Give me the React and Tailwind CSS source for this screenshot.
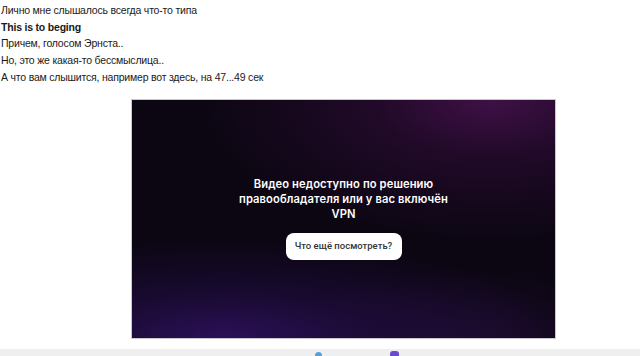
export default function App() {
  return (
    <div className="w-[640px] h-[356px] bg-white overflow-hidden flex flex-col">
      <div className="flex-1 flex flex-col">
        <div className="pl-[1px] pt-[2px] flex flex-col text-[10.5px] tracking-[-0.2px] leading-[16.7px] text-[#1a1a1a] font-['Liberation_Sans','Arial',sans-serif]">
          <p>Лично мне слышалось всегда что-то типа</p>
          <p className="font-bold">This is to beging</p>
          <p>Причем, голосом Эрнста..</p>
          <p>Но, это же какая-то бессмыслица..</p>
          <p>А что вам слышится, например вот здесь, на 47...49 сек</p>
        </div>
        <div className="mt-[13px] ml-[131px] w-[425px] h-[240px] border border-[#c9c6cc] bg-[#0b0612] bg-[image:radial-gradient(ellipse_70%_60%_at_85%_0%,#3f1046_0%,rgba(50,12,58,0.55)_40%,transparent_100%),radial-gradient(ellipse_80%_42%_at_22%_100%,#2b1058_0%,rgba(38,14,78,0.5)_45%,transparent_100%),radial-gradient(ellipse_45%_30%_at_80%_100%,rgba(36,14,56,0.6)_0%,transparent_100%)] flex flex-col items-center justify-center">
          <div className="text-white font-semibold text-[11.2px] leading-[15px] text-center font-['Inter','Noto_Sans',sans-serif] tracking-[0.1px]">
            <p>Видео недоступно по решению</p>
            <p>правообладателя или у вас включён</p>
            <p>VPN</p>
          </div>
          <button className="mt-[11px] w-[116px] h-[27px] rounded-[8px] bg-white text-[#333] text-[9.5px] font-medium font-['Roboto','Noto_Sans',sans-serif] flex items-center justify-center">
            Что ещё посмотреть?
          </button>
        </div>
      </div>
      <div className="h-[7px] bg-[#efefef] flex items-start">
        <div className="ml-[315px] mt-[3px] w-[7px] h-[7px] rounded-full bg-[#5aa0d8]" />
        <div className="ml-[68px] mt-[2px] w-[9px] h-[9px] rounded-[3px] bg-[#6a4bd0]" />
      </div>
    </div>
  );
}
